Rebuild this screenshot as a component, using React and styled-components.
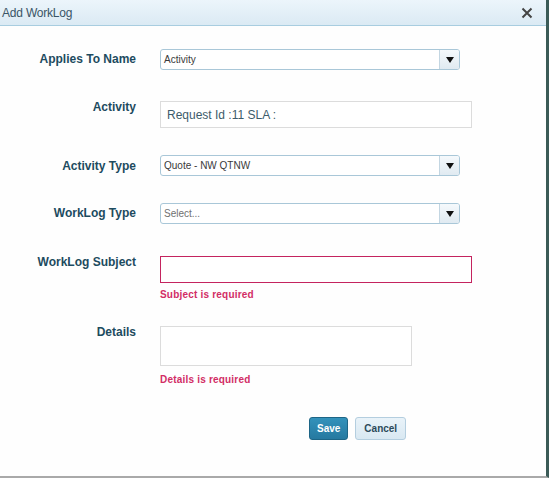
import React from "react";
import styled, { createGlobalStyle } from "styled-components";

const Global = createGlobalStyle`
  html, body {
    margin: 0;
    padding: 0;
    background: #ffffff;
  }
  body {
    font-family: "Liberation Sans", Arial, sans-serif;
  }
`;

const Dialog = styled.div`
  width: 546px;
  height: 476px;
  border-right: 3px solid #3b5b57;
  border-bottom: 2px solid #a9a9a9;
  background: #fefefe;
  display: flex;
  flex-direction: column;
`;

const Header = styled.div`
  height: 25px;
  display: flex;
  align-items: center;
  justify-content: space-between;
  padding: 0 13px 0 2px;
  background: linear-gradient(#ecf5fb, #dbeaf4);
  border-bottom: 1px solid #a8cde0;
`;

const Title = styled.span`
  font-size: 12px;
  color: #3a5566;
  letter-spacing: -0.2px;
`;

const Close = styled.button`
  border: 0;
  background: none;
  padding: 0;
  width: 12px;
  height: 12px;
  display: flex;
  cursor: pointer;
`;

const Body = styled.div`
  padding-top: 23px;
  display: flex;
  flex-direction: column;
`;

const Row = styled.div`
  display: grid;
  grid-template-columns: 136px 1fr;
  column-gap: 24px;
  height: ${(p) => p.$h}px;
`;

const Label = styled.label`
  text-align: right;
  font-size: 12px;
  line-height: 14px;
  font-weight: bold;
  color: #1d4b5f;
  margin-top: ${(p) => p.$top}px;
`;

const Control = styled.div`
  display: flex;
  flex-direction: column;
  align-items: flex-start;
`;

const SelectBox = styled.div`
  width: 300px;
  height: 21px;
  box-sizing: border-box;
  border: 1px solid #a9c7d8;
  border-radius: 3px;
  display: flex;
  background: #fff;
  overflow: hidden;
`;

const SelectText = styled.span`
  flex: 1;
  padding-left: 3px;
  font-size: 10px;
  line-height: 19px;
  color: ${(p) => (p.$placeholder ? "#707070" : "#3a3a3a")};
`;

const ArrowBtn = styled.span`
  width: 19px;
  border-left: 1px solid #c3d6e2;
  background: linear-gradient(#f5f9fc, #e0eaf1);
  display: flex;
  align-items: center;
  justify-content: center;
`;

const TextInput = styled.div`
  width: ${(p) => p.$w}px;
  height: ${(p) => p.$hh}px;
  box-sizing: border-box;
  border: 1px solid ${(p) => (p.$error ? "#c4245f" : "#dcdcdc")};
  padding: 6px 6px 0;
  font-size: 12px;
  color: #3d5c6b;
  background: #fff;
`;

const Error = styled.span`
  margin-top: ${(p) => p.$mt}px;
  font-size: 10px;
  line-height: 12px;
  font-weight: bold;
  letter-spacing: 0.2px;
  color: #d22d65;
`;

const Actions = styled.div`
  display: flex;
  gap: 7px;
  padding-left: 309px;
  margin-top: 1px;
`;

const Button = styled.button`
  height: 23px;
  padding: 0 ${(p) => (p.$primary ? 7 : 8)}px;
  border-radius: 3px;
  border: 1px solid ${(p) => (p.$primary ? "#1d6586" : "#b4cedf")};
  background: ${(p) =>
    p.$primary
      ? "linear-gradient(#3392bb, #2679a0)"
      : "linear-gradient(#e9f3f9, #d9e8f2)"};
  color: ${(p) => (p.$primary ? "#fff" : "#2b4a5a")};
  font-family: "Liberation Sans", Arial, sans-serif;
  font-size: 10px;
  font-weight: bold;
  cursor: pointer;
`;

const Select = ({ value, placeholder }) => (
  <SelectBox>
    <SelectText $placeholder={placeholder}>{value}</SelectText>
    <ArrowBtn>
      <svg width="8" height="6" viewBox="0 0 8 6">
        <path d="M0 0 H8 L4 6 Z" fill="#111" />
      </svg>
    </ArrowBtn>
  </SelectBox>
);

export default function App() {
  return (
    <>
      <Global />
      <Dialog>
        <Header>
          <Title>Add WorkLog</Title>
          <Close aria-label="Close">
            <svg width="12" height="12" viewBox="0 0 12 12">
              <path
                d="M1.5 1.5 L10.5 10.5 M10.5 1.5 L1.5 10.5"
                stroke="#444"
                strokeWidth="2"
              />
            </svg>
          </Close>
        </Header>
        <Body>
          <Row $h={52}>
            <Label $top={3}>Applies To Name</Label>
            <Control>
              <Select value="Activity" />
            </Control>
          </Row>
          <Row $h={54}>
            <Label $top={-1}>Activity</Label>
            <Control>
              <TextInput $w={312} $hh={27}>Request Id :11 SLA :</TextInput>
            </Control>
          </Row>
          <Row $h={48}>
            <Label $top={4}>Activity Type</Label>
            <Control>
              <Select value="Quote - NW QTNW" />
            </Control>
          </Row>
          <Row $h={53}>
            <Label $top={3}>WorkLog Type</Label>
            <Control>
              <Select value="Select..." placeholder />
            </Control>
          </Row>
          <Row $h={70}>
            <Label $top={-1}>WorkLog Subject</Label>
            <Control>
              <TextInput $w={312} $hh={27} $error />
              <Error $mt={6}>Subject is required</Error>
            </Control>
          </Row>
          <Row $h={90}>
            <Label $top={-1}>Details</Label>
            <Control>
              <TextInput $w={252} $hh={40} />
              <Error $mt={8}>Details is required</Error>
            </Control>
          </Row>
          <Actions>
            <Button $primary>Save</Button>
            <Button>Cancel</Button>
          </Actions>
        </Body>
      </Dialog>
    </>
  );
}
